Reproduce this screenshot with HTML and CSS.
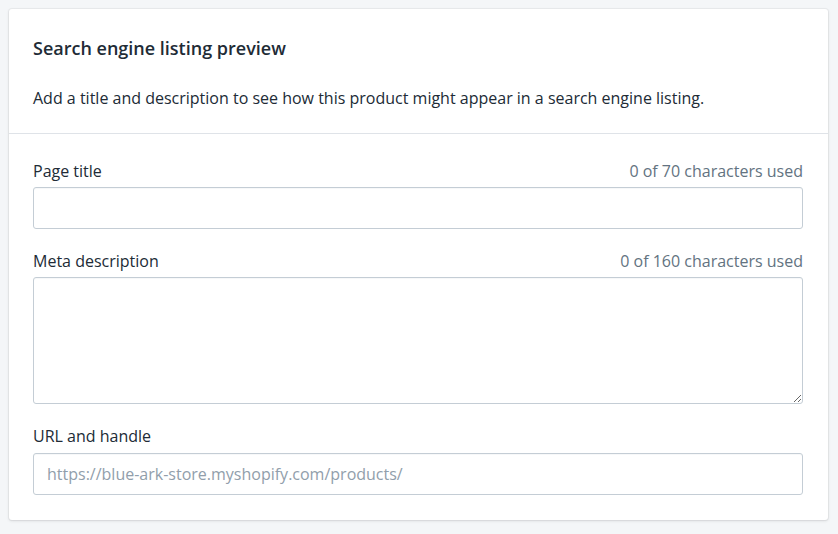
FILE: index.html
```html
<!DOCTYPE html>
<html lang="en">
<head>
<meta charset="utf-8">
<title>Search engine listing preview</title>
<link rel="stylesheet" href="styles.css">
</head>
<body>
<div class="card">
  <div class="section section-head">
    <h2 class="title">Search engine listing preview</h2>
    <p class="desc">Add a title and description to see how this product might appear in a search engine listing.</p>
  </div>
  <div class="section section-form">
    <div class="field">
      <div class="label-row">
        <label class="label" for="pt">Page title</label>
        <span class="count">0 of 70 characters used</span>
      </div>
      <input id="pt" class="input" type="text">
    </div>
    <div class="field">
      <div class="label-row">
        <label class="label" for="md">Meta description</label>
        <span class="count">0 of 160 characters used</span>
      </div>
      <textarea id="md" class="input textarea"></textarea>
    </div>
    <div class="field">
      <div class="label-row label-row-last">
        <label class="label" for="url">URL and handle</label>
      </div>
      <input id="url" class="input" type="text" placeholder="https://blue-ark-store.myshopify.com/products/">
    </div>
  </div>
</div>
</body>
</html>
```
FILE: styles.css
```css
html, body {
  margin: 0;
  padding: 0;
  background: #f4f6f8;
}
body {
  padding: 9px 10px 14px 9px;
  font-family: "Open Sans", "Noto Sans", sans-serif;
  color: #212b36;
}
.card {
  background: #fff;
  border-radius: 3px;
  box-shadow: 0 0 0 1px rgba(63, 63, 68, 0.05), 0 1px 3px 0 rgba(63, 63, 68, 0.15);
}
.section {
  padding: 0 25px 0 24px;
}
.section-head {
  padding-top: 27px;
  padding-bottom: 25px;
  border-bottom: 1px solid #dfe3e8;
}
.title {
  margin: 0;
  font-size: 18px;
  font-weight: 600;
  line-height: 24px;
}
.desc {
  margin: 28px 0 0;
  font-size: 16px;
  line-height: 20px;
}
.section-form {
  padding-top: 25px;
  padding-bottom: 25px;
  display: flex;
  flex-direction: column;
  gap: 20px;
}
.label-row {
  display: flex;
  justify-content: space-between;
  align-items: center;
  height: 24px;
  margin-bottom: 4px;
}
.label-row-last {
  margin-bottom: 5px;
}
.label {
  font-size: 16px;
}
.count {
  font-size: 16px;
  color: #637381;
}
.input {
  display: block;
  box-sizing: border-box;
  width: 100%;
  height: 42px;
  margin: 0;
  padding: 0 13px;
  border: 1px solid #c4cdd5;
  border-radius: 3px;
  box-shadow: inset 0 1px 0 0 rgba(99, 115, 129, 0.05);
  font-family: inherit;
  font-size: 16px;
  color: #212b36;
  background: #fff;
  outline: none;
}
.input::placeholder {
  color: #919eab;
}
.textarea {
  height: 127px;
  padding: 8px 13px;
  resize: vertical;
}
```
